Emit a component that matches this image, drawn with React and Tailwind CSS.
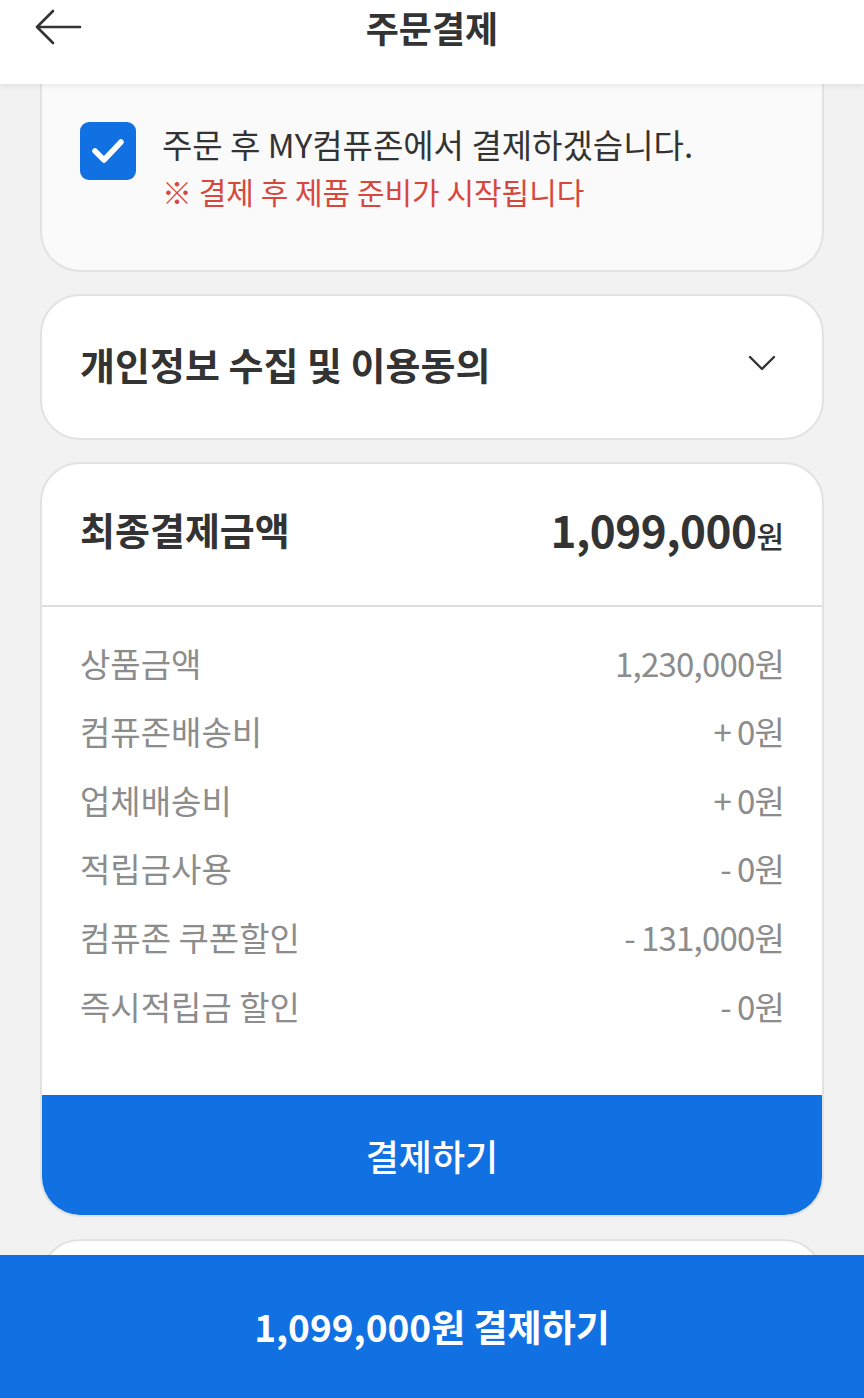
import React from "react";

const font = { fontFamily: '"Noto Sans CJK KR", "Noto Sans", sans-serif' };

function Row({ label, sign, value }) {
  return (
    <div className="flex h-[68.6px] items-center justify-between">
      <span className="text-[33px] text-[#8c8c8c]">{label}</span>
      <span className="text-[33px] tracking-[-0.8px] text-[#8c8c8c]">
        {sign ? <span className="mr-[6px]">{sign}</span> : null}
        {value}
      </span>
    </div>
  );
}

export default function App() {
  return (
    <div style={font} className="relative h-[1398px] w-[864px] overflow-hidden bg-[#f2f2f2]">
      <header className="relative z-10 h-[84px] bg-white shadow-[0_2px_6px_rgba(0,0,0,0.08)]">
        <div className="grid h-[54px] grid-cols-[1fr_auto_1fr] items-center">
          <div className="pl-[33px]">
            <svg width="50" height="40" viewBox="0 0 50 40" fill="none" stroke="#333" strokeWidth="2.6" strokeLinecap="round" strokeLinejoin="round">
              <path d="M47 20H4M20 4L4 20L20 36" />
            </svg>
          </div>
          <h1 className="text-[36px] font-bold text-[#333]">주문결제</h1>
          <div />
        </div>
      </header>

      <main className="flex flex-col gap-[22px] px-[40px]">
        <section className="h-[188px] rounded-b-[40px] border-x-2 border-b-2 border-[#e2e2e2] bg-[#fafafa] pl-[38px] pt-[38px]">
          <div className="flex gap-[26px]">
            <div className="flex h-[58px] w-[56px] shrink-0 items-center justify-center rounded-[9px] bg-[#1170e2]">
              <svg width="34" height="28" viewBox="0 0 34 28" fill="none" stroke="white" strokeWidth="5.5" strokeLinecap="round" strokeLinejoin="round">
                <path d="M4 14L13 23L30 5" />
              </svg>
            </div>
            <div className="flex flex-col">
              <span className="h-[44px] text-[33px] leading-[44px] text-[#333]">주문 후 MY컴퓨존에서 결제하겠습니다.</span>
              <span className="mt-[3px] text-[30px] leading-[44px] text-[#d6483d]">※ 결제 후 제품 준비가 시작됩니다</span>
            </div>
          </div>
        </section>

        <section className="flex h-[146px] items-center justify-between rounded-[40px] border-2 border-[#e2e2e2] bg-white pb-[8px] pl-[38px] pr-[46px]">
          <span className="text-[38px] font-bold text-[#333]">개인정보 수집 및 이용동의</span>
          <svg width="28" height="16" viewBox="0 0 28 16" fill="none" stroke="#333" strokeWidth="2.4" strokeLinecap="round" strokeLinejoin="round">
            <path d="M2 2L14 14L26 2" />
          </svg>
        </section>

        <section className="overflow-hidden rounded-[40px] border-2 border-[#e2e2e2] bg-white">
          <div className="flex h-[143px] items-center justify-between border-b-2 border-[#dedede] pb-[12px] pl-[38px] pr-[38px]">
            <span className="text-[38px] font-bold text-[#333]">최종결제금액</span>
            <span className="flex items-baseline text-[#333]">
              <span className="text-[44px] font-bold tracking-[-0.5px]">1,099,000</span>
              <span className="text-[30px] font-medium">원</span>
            </span>
          </div>
          <div className="px-[38px] pb-[54px] pt-[22px]">
            <Row label="상품금액" value="1,230,000원" />
            <Row label="컴퓨존배송비" sign="+" value="0원" />
            <Row label="업체배송비" sign="+" value="0원" />
            <Row label="적립금사용" sign="-" value="0원" />
            <Row label="컴퓨존 쿠폰할인" sign="-" value="131,000원" />
            <Row label="즉시적립금 할인" sign="-" value="0원" />
          </div>
          <button className="flex h-[120px] w-full items-center justify-center bg-[#1170e2] text-[36px] font-medium text-white">
            결제하기
          </button>
        </section>

        <section className="h-[200px] rounded-[40px] border-2 border-[#e2e2e2] bg-white" />
      </main>

      <button className="absolute bottom-0 left-0 z-20 flex h-[143px] w-full items-center justify-center bg-[#1170e2] text-[37px] font-bold text-white">
        1,099,000원 결제하기
      </button>
    </div>
  );
}
